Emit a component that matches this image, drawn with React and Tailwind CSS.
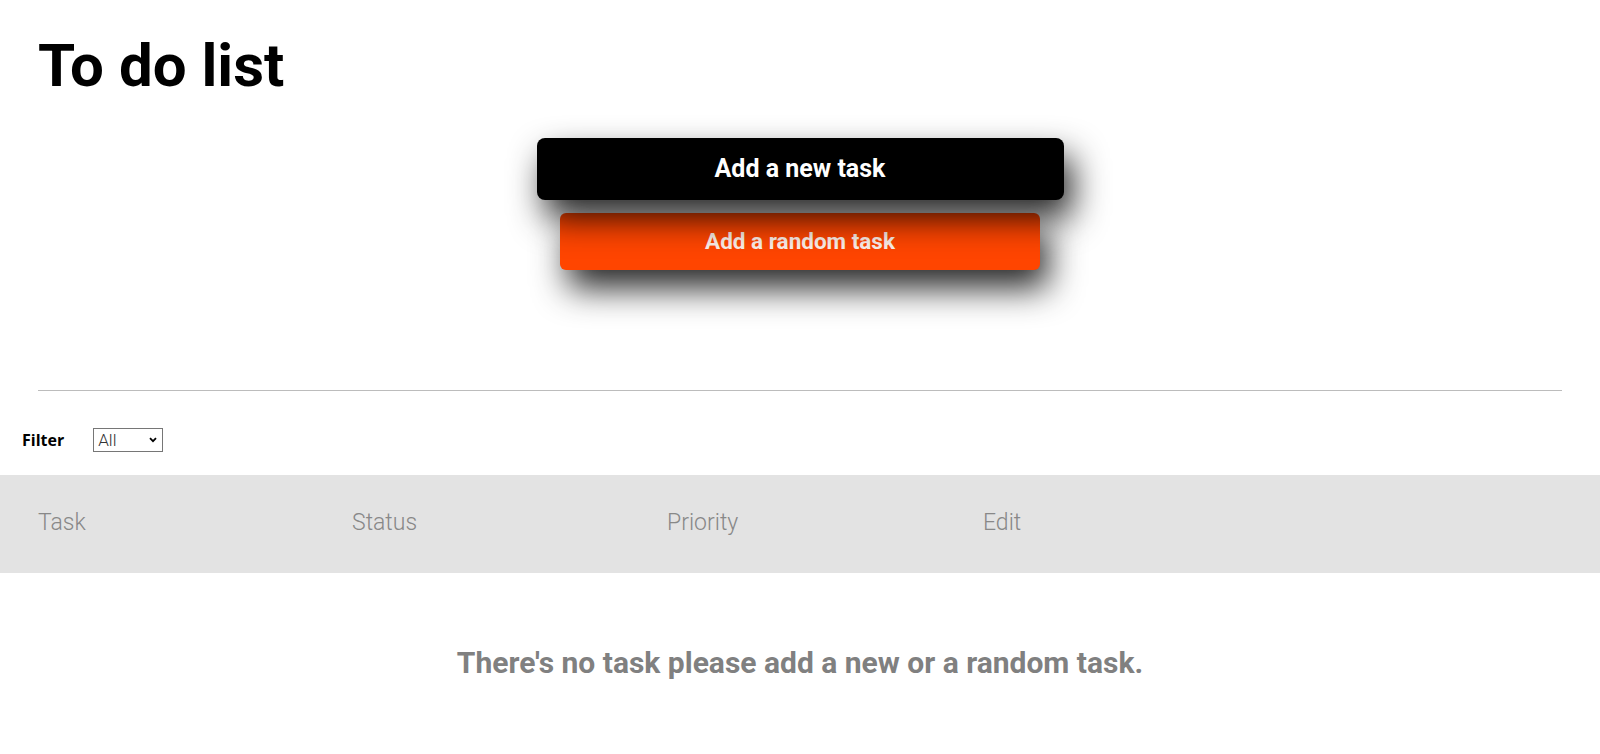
import React, { useState } from "react";

export default function App() {
  const [filter, setFilter] = useState("all");
  const tasks = [];

  return (
    <div className="min-h-screen bg-white font-['Roboto',sans-serif] text-black">
      <h1 className="pl-[38px] pt-[36px] text-[60px] font-bold leading-none">To do list</h1>

      <div className="flex flex-col items-center gap-[13px] pt-[42px]">
        <button className="relative z-10 flex h-[62px] w-[527px] items-center justify-center rounded-lg bg-black text-[25px] font-bold text-white shadow-[8px_18px_34px_rgba(0,0,0,0.85)]">
          Add a new task
        </button>
        <button className="flex h-[57px] w-[480px] items-center justify-center rounded-md bg-[#ff4500] text-[22.5px] font-bold text-[#fcefe9] shadow-[8px_18px_34px_rgba(0,0,0,0.85)]">
          Add a random task
        </button>
      </div>

      <hr className="mx-[38px] mt-[120px] border-t border-[#bcbcbc]" />

      <div className="flex items-center gap-[29px] pl-[22px] pt-[37px]">
        <label className="font-['Open_Sans',sans-serif] text-[16px] font-bold">Filter</label>
        <div className="relative">
          <select
            value={filter}
            onChange={(e) => setFilter(e.target.value)}
            className="h-[24px] w-[70px] appearance-none border border-[#767676] pl-[4px] text-[17px] leading-none font-light text-[#333]"
          >
            <option value="all">All</option>
            <option value="todo">To do</option>
            <option value="doing">Doing</option>
            <option value="done">Done</option>
          </select>
          <svg
            className="pointer-events-none absolute right-[6px] top-[9px]"
            width="8"
            height="6"
            viewBox="0 0 8 6"
            fill="none"
          >
            <path d="M1 1.2L4 4.2L7 1.2" stroke="#000" strokeWidth="1.8" />
          </svg>
        </div>
      </div>

      <div className="mt-[22px] grid h-[98px] grid-cols-[314px_315px_316px_1fr] items-center bg-[#e3e3e3] pl-[38px] text-[23px] font-light text-[#888]">
        <span>Task</span>
        <span>Status</span>
        <span>Priority</span>
        <span>Edit</span>
      </div>

      {tasks.length === 0 && (
        <p className="pt-[67px] text-center text-[30px] font-bold text-[#808080]">
          There's no task please add a new or a random task.
        </p>
      )}
    </div>
  );
}
